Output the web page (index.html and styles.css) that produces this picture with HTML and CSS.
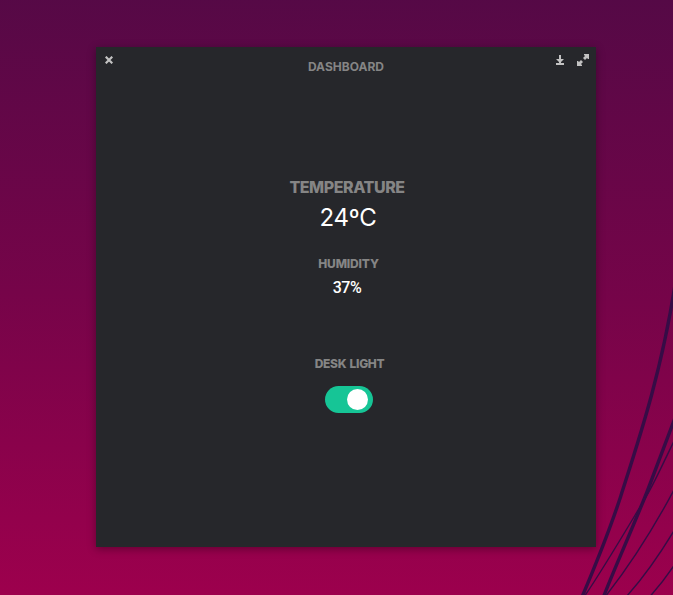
FILE: index.html
```html
<!DOCTYPE html>
<html lang="en">
<head>
<meta charset="utf-8">
<title>Dashboard</title>
<link rel="stylesheet" href="styles.css">
</head>
<body>
<svg class="wallpaper" viewBox="0 0 673 595" aria-hidden="true">
  <g class="thick">
    <path d="M582 597C596 564 609 532 620.500 497C638 442 661 375 675 285"/>
    <path d="M603.500 597C612 574 631 532 647 492C656 468 665 444 675 418"/>
  </g>
  <g class="thin">
    <path d="M584 597C604 568 632 520 646 497C656 480 664 461 675 439"/>
    <path d="M605 597C627 569 649 537 675 488"/>
    <path d="M626 597C644 577 660 554 675 529"/>
    <path d="M649.500 597Q663 582 675 564"/>
  </g>
</svg>
<main class="window">
  <header class="titlebar">
    <button class="icon-button" aria-label="Close"><svg width="8" height="8" viewBox="0 0 8 8"><path class="stroke" d="M.7.7 7.300 7.300M7.300.7.7 7.300"/></svg></button>
    <h1 class="label title">DASHBOARD</h1>
    <div class="actions">
      <button class="icon-button" aria-label="Minimize"><svg width="8" height="10" viewBox="0 0 8 10"><path d="M3 0H5V4H8L5 7V8H8V10H0V8H3V7L0 4H3Z"/></svg></button>
      <button class="icon-button" aria-label="Maximize"><svg width="12" height="12" viewBox="0 0 12 12"><path d="M7 0H12V5H11L10 4 8 6 6 4 8 2 7 1ZM0 7H1L2 8 4 6 6 8 4 10 5 11V12H0Z"/></svg></button>
    </div>
  </header>
  <section class="content">
    <h2 class="label temperature-label">TEMPERATURE</h2>
    <p class="temperature">24ºC</p>
    <h2 class="label humidity-label">HUMIDITY</h2>
    <p class="humidity">37%</p>
    <h2 class="label light-label">DESK LIGHT</h2>
    <button class="toggle" role="switch" aria-checked="true" aria-label="Desk light"><span class="knob"></span></button>
  </section>
</main>
</body>
</html>
```
FILE: styles.css
```css
* { box-sizing: border-box; }

body {
  margin: 0;
  height: 595px;
  padding: 47px 0 0 96px;
  overflow: hidden;
  background: linear-gradient(181deg, #550946 0%, #760449 50%, #9d004d 100%);
  font-family: Inter, "Open Sans", sans-serif;
}

.wallpaper {
  position: absolute;
  inset: 0;
  width: 673px;
  height: 595px;
  fill: none;
  stroke: #360c46;
}
.thick { stroke-width: 3.4; }
.thin { stroke-width: 1.4; }

.window {
  position: relative;
  width: 500px;
  height: 500px;
  background: #26272b;
  box-shadow: 0 2px 8px rgba(0, 0, 0, .35);
}

.titlebar {
  display: grid;
  grid-template-columns: 100px 1fr 100px;
  height: 40px;
  padding: 7px 7px 0 9px;
}

h1, h2, p { margin: 0; }

.label {
  color: #858585;
  font-weight: 800;
  font-size: 12px;
  line-height: 16px;
  letter-spacing: -.15px;
}
.title {
  padding: 5px 2px 0 0;
  text-align: center;
  font-weight: 700;
  letter-spacing: .02px;
}

.icon-button {
  display: flex;
  align-items: center;
  height: 12px;
  padding: 0;
  border: 0;
  background: none;
}
.icon-button svg { display: block; fill: #c2c2c2; }
.icon-button .stroke { fill: none; stroke: #c2c2c2; stroke-width: 2.2; }
.actions { display: flex; justify-content: flex-end; gap: 13px; }

.content {
  display: flex;
  flex-direction: column;
  align-items: center;
  padding: 89px 0 0 5px;
}
.temperature-label {
  margin-right: 3px;
  font-size: 16px;
  line-height: 22px;
  letter-spacing: -.45px;
}
.temperature {
  margin: 5px 1px 0 0;
  color: #fff;
  font-size: 24px;
  line-height: 30px;
  letter-spacing: -.3px;
}
.humidity-label { margin-top: 23px; }
.humidity {
  margin: 6px 3px 0 0;
  color: #fff;
  font-family: Roboto, sans-serif;
  font-size: 16px;
  font-weight: 500;
  line-height: 20px;
  letter-spacing: -.5px;
}
.light-label { margin: 58px 0 0 2px; letter-spacing: -.3px; word-spacing: 1px; }

.toggle {
  display: flex;
  justify-content: flex-end;
  width: 48px;
  height: 27px;
  margin-top: 14px;
  padding: 3px 5px 3px 3px;
  border: 0;
  border-radius: 14px;
  background: #16c596;
}
.knob { width: 21px; height: 21px; border-radius: 50%; background: #fff; }
```
